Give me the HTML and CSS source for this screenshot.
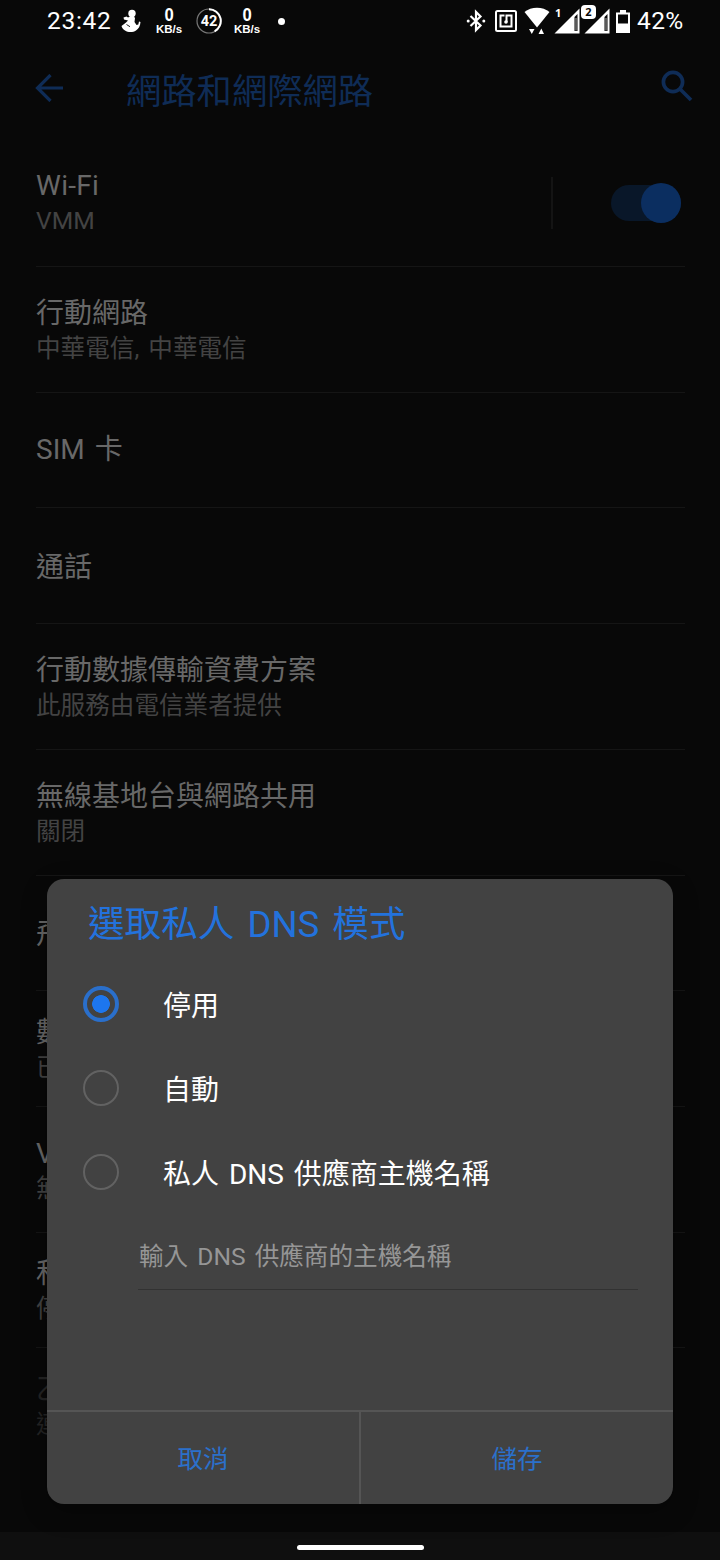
FILE: index.html
```
<!DOCTYPE html>
<html lang="zh-Hant">
<head>
    <meta charset="UTF-8">
    <meta name="viewport" content="width=device-width, initial-scale=1.0">
    <title>網路和網際網路</title>

    <link rel="stylesheet" href="styles.css">
</head>
<body>

<div class="screen">
    <div class="status-bar">
        <span class="clock">23:42</span>
        <svg class="icon-person" width="20" height="24" viewBox="0 0 20 24" fill="#fff">
            <circle cx="11" cy="4.500" r="3.700"/>
            <path d="M7 8.500L10 7H12.500L14 9L13.500 13L15.500 16L17.300 15.500L18 12.500L19.500 13C19.300 17 17.500 20 15 21.500C12 23.500 7 23.500 4 21.500C2.500 20.500 1 19 0.500 17L5 13.500L7 11.500L3 10.500L2.500 8.500L5.500 7.500Z"/>
            <path d="M5.500 15.500l3.500 2.200" stroke="#080808" stroke-width="0.900"/>
        </svg>
        <span class="net-speed net-first"><b>0</b><small>KB/s</small></span>
        <span class="battery-ring">
            <svg width="26" height="26" viewBox="0 0 26 26" fill="none">
                <circle cx="13" cy="13" r="12" stroke="#777" stroke-width="1.200"/>
                <path d="M13 1.300A11.700 11.700 0 0 1 18.600 23.300" stroke="#fff" stroke-width="2"/>
            </svg>
            <b>42</b>
        </span>
        <span class="net-speed"><b>0</b><small>KB/s</small></span>
        <span class="dot"></span>

        <div class="status-right">
            <svg width="20" height="24" viewBox="0 0 20 24" fill="none" stroke="#fff" stroke-width="2.200">
                <path d="M4.500 7L14.500 16.500L10 21V3L14.500 7.500L4.500 17"/>
                <circle cx="2.200" cy="12" r="1.500" fill="#fff" stroke="none"/>
                <circle cx="17.800" cy="12" r="1.500" fill="#fff" stroke="none"/>
            </svg>
            <svg class="icon-nfc" width="22" height="22" viewBox="0 0 22 22" fill="none" stroke="#fff" stroke-width="2">
                <rect x="1" y="1" width="20" height="20" rx="1.500"/>
                <path d="M9.500 5.500H5.500V16.500H16.500V5.500H11.500V12"/>
                <circle cx="11" cy="12" r="1.800" fill="#fff" stroke="none"/>
            </svg>
            <svg class="icon-wifi" width="26" height="28" viewBox="0 0 26 28" fill="#fff">
                <path d="M0.500 5C7-0.700 19-0.700 25.500 5L13 20.500Z"/>
                <path d="M5 22h5.500l-2.700 5z M14.500 27h5.500l-2.700-5.500z"/>
            </svg>
            <span class="signal">
                <svg width="26" height="26" viewBox="0 0 26 26">
                    <path d="M0.500 25.500L25.500 0.500V25.500Z" fill="#fff"/>
                    <path d="M20.500 9L23.500 6V23H20.500Z" fill="#080808"/>
                    <path d="M22 10V22.500" stroke="#aaa"/>
                </svg>
                <b class="sim-number">1</b>
            </span>
            <span class="signal">
                <svg width="26" height="26" viewBox="0 0 26 26">
                    <path d="M0.500 25.500L25.500 0.500V25.500Z" fill="#fff"/>
                    <path d="M20.500 9L23.500 6V23H20.500Z" fill="#080808"/>
                    <path d="M22 10V22.500" stroke="#aaa"/>
                </svg>
                <b class="sim-number sim-active">2</b>
            </span>
            <svg class="icon-battery" width="14" height="23" viewBox="0 0 14 23">
                <path d="M4 0h6v2.500h4V23H0V2.500h4z" fill="#fff"/>
                <path d="M2 4.500h10v9H2z" fill="#080808"/>
            </svg>
            <span class="percent">42%</span>
        </div>
    </div>

    <div class="app-bar">
        <svg class="icon-back" width="28" height="28" viewBox="0 0 28 28" fill="none" stroke="#0f2c56" stroke-width="3.200">
            <path d="M28 14H2.500M15.500 1L2.500 14L15.500 27"/>
        </svg>
        <h1>網路和網際網路</h1>
        <svg class="icon-search" width="32" height="32" viewBox="0 0 32 32" fill="none" stroke="#0f2c56" stroke-width="3.700">
            <circle cx="12" cy="12" r="9.600"/>
            <path d="M19 19L30 30"/>
        </svg>
    </div>

    <div class="settings-list">
        <div class="row wifi-row">
            <div class="row-text">
                <span class="title">Wi-Fi</span>
                <span class="summary">VMM</span>
            </div>
            <span class="separator"></span>
            <span class="switch"><span class="thumb"></span></span>
        </div>
        <div class="row">
            <span class="title">行動網路</span>
            <span class="summary">中華電信, 中華電信</span>
        </div>
        <div class="row short sim-row">
            <span class="title">SIM 卡</span>
        </div>
        <div class="row short">
            <span class="title">通話</span>
        </div>
        <div class="row">
            <span class="title">行動數據傳輸資費方案</span>
            <span class="summary">此服務由電信業者提供</span>
        </div>
        <div class="row">
            <span class="title">無線基地台與網路共用</span>
            <span class="summary">關閉</span>
        </div>
        <div class="row short">
            <span class="title">飛</span>
        </div>
        <div class="row short">
            <span class="title">數</span>
            <span class="summary">已</span>
        </div>
        <div class="row">
            <span class="title">V</span>
            <span class="summary">無</span>
        </div>
        <div class="row short">
            <span class="title">私</span>
            <span class="summary">停</span>
        </div>
        <div class="row short disabled">
            <span class="title">乙</span>
            <span class="summary">連</span>
        </div>
    </div>

    <div class="nav-bar"><span class="nav-handle"></span></div>

    <div class="dialog">
        <h2>選取私人 DNS 模式</h2>
        <div class="option"><span class="radio checked"></span><span>停用</span></div>
        <div class="option"><span class="radio"></span><span>自動</span></div>
        <div class="option"><span class="radio"></span><span>私人 DNS 供應商主機名稱</span></div>
        <div class="hostname">輸入 DNS 供應商的主機名稱</div>
        <div class="buttons">
            <div class="button">取消</div>
            <div class="button">儲存</div>
        </div>
    </div>
</div>

</body>
</html>
```
FILE: styles.css
```
* {
    box-sizing: border-box;
}

body {
    margin: 0;
    background-color: #080808;
    font-family: Roboto, "Noto Sans CJK TC", sans-serif;
    font-weight: 400;
    word-spacing: 3px;
}

.screen {
    position: relative;
    width: 720px;
    height: 1560px;
    overflow: hidden;
    display: flex;
    flex-direction: column;
}

.status-bar {
    height: 42px;
    flex: none;
    display: flex;
    align-items: center;
    padding: 0 35px 0 47px;
    color: #fff;
}

.clock {
    width: 74px;
    padding-bottom: 1px;
    font-size: 24.5px;
    letter-spacing: 0.7px;
}

.net-speed {
    display: flex;
    flex-direction: column;
    align-items: center;
    width: 28px;
    font-family: "Liberation Sans", sans-serif;
}

.net-speed b {
    font-size: 18.5px;
    line-height: 14px;
    height: 15px;
    font-weight: bold;
    transform: scaleX(0.9);
}

.net-speed small {
    font-size: 11.5px;
    line-height: 12px;
    font-weight: bold;
}

.net-first {
    margin-left: 14px;
}

.battery-ring {
    position: relative;
    width: 26px;
    height: 26px;
    margin: 0 11px 0 13px;
}

.battery-ring b {
    position: absolute;
    inset: 0;
    text-align: center;
    font-size: 14.5px;
    line-height: 27px;
    font-weight: bold;
}

.dot {
    width: 7px;
    height: 7px;
    margin-left: 17px;
    border-radius: 50%;
    background-color: #fff;
}

.status-right {
    margin-left: auto;
    display: flex;
    align-items: center;
}

.icon-nfc {
    margin-left: 9px;
}

.icon-wifi {
    margin-left: 7px;
}

.signal {
    position: relative;
    width: 26px;
    height: 26px;
    margin-left: 4px;
}

.sim-number {
    position: absolute;
    left: 1px;
    top: -2px;
    font-family: "Open Sans", sans-serif;
    font-size: 11px;
    line-height: 14px;
    font-weight: bold;
}

.sim-active {
    left: -3px;
    top: -3px;
    width: 15px;
    height: 14px;
    border-radius: 4px;
    background-color: #fff;
    color: #080808;
    text-align: center;
}

.icon-battery {
    margin-left: 6px;
}

.percent {
    width: 48px;
    margin-left: 7px;
    padding-bottom: 1px;
    font-size: 24.5px;
    letter-spacing: 0.4px;
    white-space: nowrap;
}

.app-bar {
    height: 98px;
    flex: none;
    display: flex;
    align-items: center;
    padding: 0 27px 7px 35px;
}

h1 {
    margin: 8px 0 0 63px;
    color: #0f2c56;
    font-size: 35.3px;
    line-height: 44px;
    font-weight: 400;
}

.icon-search {
    margin-left: auto;
    margin-bottom: 3px;
}

.settings-list {
    flex: 1;
    padding: 0 35px 0 36px;
    overflow: hidden;
}

.row {
    height: 126px;
    padding-top: 3px;
    display: flex;
    flex-direction: column;
    justify-content: center;
    border-bottom: 1px solid #151515;
}

.row.short {
    height: 115.400px;
}

.row.sim-row {
    padding-top: 0;
    padding-bottom: 1px;
}

.row .title {
    display: block;
    color: #686868;
    font-size: 28px;
    line-height: 35px;
}

.row .summary {
    display: block;
    color: #434343;
    font-size: 24.6px;
    line-height: 35px;
}

.row.disabled .title,
.row.disabled .summary {
    color: #242424;
}

.row.disabled {
    border-bottom: none;
}

.row.wifi-row {
    height: 127px;
    flex-direction: row;
    align-items: center;
    padding-top: 0;
    padding-right: 4px;
}

.wifi-row .title {
    letter-spacing: 0.3px;
}

.separator {
    width: 2px;
    height: 52px;
    margin: 0 58px 0 auto;
    background-color: #141414;
}

.switch {
    width: 70px;
    height: 36px;
    border-radius: 18px;
    background-color: #091729;
    display: flex;
    align-items: center;
    justify-content: flex-end;
}

.thumb {
    width: 40px;
    height: 40px;
    flex: none;
    border-radius: 50%;
    background-color: #0b2e60;
}

.nav-bar {
    height: 28px;
    flex: none;
    display: flex;
    justify-content: center;
    align-items: flex-end;
    padding-bottom: 10px;
    background-color: #0f0f0f;
}

.nav-handle {
    width: 127px;
    height: 5px;
    border-radius: 3px;
    background-color: #fff;
}

.dialog {
    position: absolute;
    left: 47px;
    top: 879px;
    width: 626px;
    height: 625px;
    display: flex;
    flex-direction: column;
    overflow: hidden;
    border-radius: 17px;
    background-color: #424242;
    box-shadow: 0 8px 26px rgba(0, 0, 0, 0.3);
}

h2 {
    margin: 0;
    height: 83px;
    padding: 22px 0 0 41px;
    color: #2372dd;
    font-size: 36.6px;
    line-height: 48px;
    font-weight: 400;
    word-spacing: 4px;
}

.option {
    height: 84px;
    display: flex;
    align-items: center;
    gap: 44px;
    padding-left: 36px;
    color: #fff;
    font-size: 28px;
}

.radio {
    width: 36px;
    height: 36px;
    flex: none;
    border: 2px solid #626262;
    border-radius: 50%;
}

.radio.checked {
    border: 4px solid #2a6fcb;
    background: radial-gradient(circle, #1d76ee 8.500px, transparent 9.200px);
}

.hostname {
    height: 76px;
    margin: 0 35px 0 91px;
    padding: 24px 0 0 1px;
    border-bottom: 1px solid #323232;
    color: #969696;
    font-size: 24.6px;
    line-height: 38px;
}

.buttons {
    display: flex;
    height: 94px;
    margin-top: auto;
    border-top: 2px solid #555;
}

.button {
    flex: 1;
    display: flex;
    align-items: center;
    justify-content: center;
    padding-bottom: 4px;
    color: #2b70cb;
    font-size: 25.5px;
}

.button + .button {
    border-left: 2px solid #555;
}
```
